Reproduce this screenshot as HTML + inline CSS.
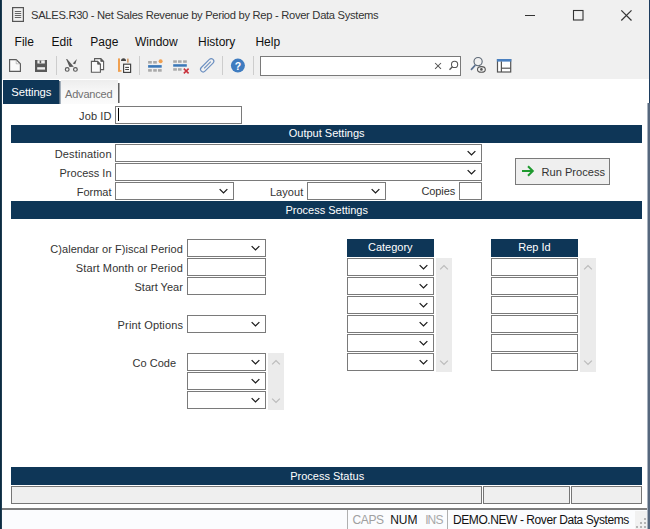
<!DOCTYPE html>
<html><head><meta charset="utf-8"><style>
html,body{margin:0;padding:0;}
body{width:650px;height:529px;position:relative;overflow:hidden;background:#fff;font-family:"Liberation Sans",sans-serif;}
.a{position:absolute;}
.t{position:absolute;white-space:pre;}
svg{overflow:visible}
</style></head><body>
<div class="a" style="left:0px;top:0px;width:650px;height:79px;background:#f0f0f0;"></div>
<svg class="a" style="left:0;top:0" width="40" height="30"><rect x="12.6" y="7.6" width="10.8" height="13.8" fill="none" stroke="#555" stroke-width="1.2"/><g stroke="#666" stroke-width="1"><line x1="14.8" y1="11.5" x2="21.2" y2="11.5"/><line x1="14.8" y1="13.5" x2="21.2" y2="13.5"/><line x1="14.8" y1="15.5" x2="21.2" y2="15.5"/><line x1="14.8" y1="17.5" x2="21.2" y2="17.5"/></g></svg>
<div class="t" style="top:9.82px;font-size:11.2px;line-height:11.2px;color:#333;letter-spacing:-0.3px;left:31px;">SALES.R30 - Net Sales Revenue by Period by Rep - Rover Data Systems</div>
<div class="a" style="left:525px;top:15px;width:10px;height:1px;background:#333;"></div>
<svg class="a" style="left:572px;top:9px" width="13" height="13"><rect x="1.5" y="1.5" width="9.5" height="9.5" fill="none" stroke="#333" stroke-width="1.1"/></svg>
<svg class="a" style="left:620px;top:9px" width="13" height="13"><line x1="1.3" y1="1.3" x2="11.5" y2="11.5" stroke="#333" stroke-width="1.2"/><line x1="11.5" y1="1.3" x2="1.3" y2="11.5" stroke="#333" stroke-width="1.2"/></svg>
<div class="t" style="top:35.54px;font-size:12px;line-height:12px;color:#111;left:14.6px;">File</div>
<div class="t" style="top:35.54px;font-size:12px;line-height:12px;color:#111;left:51.5px;">Edit</div>
<div class="t" style="top:35.54px;font-size:12px;line-height:12px;color:#111;left:90.3px;">Page</div>
<div class="t" style="top:35.54px;font-size:12px;line-height:12px;color:#111;left:135px;">Window</div>
<div class="t" style="top:35.54px;font-size:12px;line-height:12px;color:#111;left:198px;">History</div>
<div class="t" style="top:35.54px;font-size:12px;line-height:12px;color:#111;left:255.4px;">Help</div>
<div class="a" style="left:56px;top:56px;width:1px;height:19px;background:#cdcdcd;"></div>
<div class="a" style="left:139px;top:56px;width:1px;height:19px;background:#cdcdcd;"></div>
<div class="a" style="left:222px;top:56px;width:1px;height:19px;background:#cdcdcd;"></div>
<div class="a" style="left:253px;top:56px;width:1px;height:19px;background:#cdcdcd;"></div>
<div class="a" style="left:260px;top:56px;width:199px;height:18px;background:#fff;border:1px solid #7a7a7a"></div>
<svg class="a" style="left:0px;top:0px" width="650" height="80" viewBox="0 0 650 80">
<!-- new doc -->
<path d="M9.6,59.6 H16.2 L20.4,63.8 V71.4 H9.6 Z" fill="#fafafa" stroke="#5a5a5a" stroke-width="1.15"/>
<path d="M16.2,59.6 V63.8 H20.4" fill="none" stroke="#9a9a9a" stroke-width="0.6"/>
<!-- save -->
<rect x="35" y="60" width="12" height="12" fill="#5a5a5a"/>
<rect x="37.4" y="60.3" width="7.4" height="3.2" fill="#f0f0f0"/>
<rect x="39.6" y="60.6" width="1.6" height="2.6" fill="#5a5a5a"/>
<rect x="37.2" y="67.2" width="7.8" height="2.4" fill="#f0f0f0"/>
<!-- scissors -->
<path d="M66.1,59.1 L67.1,59.1 L73.8,66.8 L69.5,66.9 Z" fill="#595959"/>
<path d="M76.9,59.1 L75.2,64.3 L72.7,63.6 Z" fill="#595959"/>
<circle cx="67.2" cy="69.4" r="1.85" fill="none" stroke="#595959" stroke-width="1.2"/>
<circle cx="75.4" cy="69.4" r="1.85" fill="none" stroke="#595959" stroke-width="1.2"/>
<!-- copy -->
<path d="M94.6,58.6 H100.8 L103.6,61.4 V69.6 H94.6 Z" fill="#fafafa" stroke="#5a5a5a" stroke-width="1.1"/>
<path d="M91.4,61.4 H97.6 L100.4,64.2 V72.2 H91.4 Z" fill="#fafafa" stroke="#5a5a5a" stroke-width="1.1"/>
<path d="M97.6,61.4 V64.2 H100.4 Z" fill="#5a5a5a" stroke="#5a5a5a" stroke-width="0.8"/>
<path d="M100.8,58.6 V61.4 H103.6 Z" fill="#5a5a5a" stroke="#5a5a5a" stroke-width="0.8"/>
<!-- paste -->
<rect x="118" y="58.4" width="2" height="13.2" fill="#f0a050"/>
<rect x="118" y="70.2" width="3.5" height="1.4" fill="#f0a050"/>
<path d="M121,61 Q121,58.2 123.5,58.2 Q126,58.2 126,61 Z" fill="#444"/>
<rect x="127" y="58.6" width="1.7" height="4" fill="#d4a070"/>
<rect x="123.6" y="64.2" width="7" height="8.2" fill="#fff" stroke="#444" stroke-width="1.2"/>
<line x1="125.2" y1="67.4" x2="129" y2="67.4" stroke="#444" stroke-width="1.1"/>
<line x1="125.2" y1="69.5" x2="129" y2="69.5" stroke="#444" stroke-width="1.1"/>
<!-- insert row -->
<g fill="#a9a9a9">
<rect x="148.1" y="61" width="3.7" height="2.6"/><rect x="153.2" y="61" width="3.6" height="2.6"/>
<rect x="148.1" y="69.1" width="3.7" height="2.6"/><rect x="153.2" y="69.1" width="3.6" height="2.6"/><rect x="158" y="69.1" width="3.7" height="2.6"/>
</g>
<rect x="148.1" y="65.1" width="13.6" height="2.6" fill="#3b78b8"/>
<circle cx="160.6" cy="61.2" r="2" fill="#f0a050"/>
<!-- delete row -->
<g fill="#a9a9a9">
<rect x="173.2" y="60.3" width="3.7" height="2.5"/><rect x="178" y="60.3" width="3.6" height="2.5"/><rect x="183.1" y="60.3" width="3.7" height="2.5"/>
<rect x="173.2" y="68.2" width="3.7" height="2.5"/><rect x="178" y="68.2" width="3.6" height="2.5"/>
</g>
<rect x="173.2" y="64.2" width="13.6" height="2.5" fill="#3b78b8"/>
<path d="M183.8,68.6 L188.6,73.4 M188.6,68.6 L183.8,73.4" stroke="#c8303a" stroke-width="1.5"/>
<!-- paperclip -->
<g transform="translate(207.1,65.4) rotate(45)">
<path d="M2.6,-4 V5.6 A2.6,2.6 0 0 1 -2.6,5.6 V-5.8 A2.6,2.6 0 0 1 2.6,-5.8 V-4" fill="none" stroke="#6b8fc0" stroke-width="1.15"/>
<path d="M0,-5.2 V4.2" stroke="#6b8fc0" stroke-width="1.1" fill="none"/>
</g>
<!-- help -->
<circle cx="237.9" cy="65.6" r="7" fill="#3f7cc0"/>
<text x="237.9" y="69.6" text-anchor="middle" font-family="Liberation Sans" font-weight="bold" font-size="10.5" fill="#fff">?</text>
<!-- search x and magnifier -->
<path d="M435.1,63 L441,68.8 M441,63 L435.1,68.8" stroke="#555" stroke-width="1.05"/>
<circle cx="454.6" cy="64.4" r="3.1" fill="none" stroke="#555" stroke-width="1.05"/>
<line x1="452.4" y1="66.7" x2="449.5" y2="69.7" stroke="#555" stroke-width="1.3"/>
<!-- search eye -->
<circle cx="478.1" cy="61.6" r="4.1" fill="none" stroke="#606b78" stroke-width="1.15"/>
<line x1="475.3" y1="65.1" x2="471" y2="69.9" stroke="#5a7090" stroke-width="1.6"/>
<ellipse cx="481.4" cy="69.4" rx="4.7" ry="3.6" fill="#f0f0f0"/>
<ellipse cx="481.4" cy="69.4" rx="3.9" ry="2.8" fill="none" stroke="#555" stroke-width="1.1"/>
<circle cx="481.4" cy="69.4" r="1.3" fill="#555"/>
<!-- layout -->
<rect x="497.5" y="59.6" width="13.2" height="12.4" fill="#fff" stroke="#555" stroke-width="1.2"/>
<rect x="496.9" y="59" width="14.4" height="2.6" fill="#4a80c0"/>
<line x1="501.4" y1="61.5" x2="501.4" y2="72" stroke="#555" stroke-width="1.2"/>
<line x1="501.4" y1="68.2" x2="510.7" y2="68.2" stroke="#555" stroke-width="1.2"/>
</svg>

<div class="a" style="left:2px;top:79px;width:645px;height:429px;background:#fff;"></div>
<div class="a" style="left:3px;top:80px;width:56px;height:24px;background:#0e3657;"></div>
<div class="t" style="top:87.23px;font-size:11.3px;line-height:11.3px;color:#fff;letter-spacing:-0.1px;left:11.3px;">Settings</div>
<div class="a" style="left:61px;top:80px;width:57px;height:24px;background:linear-gradient(#ededed,#f6f6f6 45%,#fbfbfb);"></div>
<div class="a" style="left:118px;top:83px;width:1px;height:20px;background:#606060;"></div>
<div class="a" style="left:119px;top:83px;width:1px;height:20px;background:#a8a8a8;"></div>
<div class="a" style="left:59px;top:81px;width:1px;height:23px;background:#5d7184;"></div>
<div class="a" style="left:60px;top:81px;width:1px;height:23px;background:#a4b0bc;"></div>
<div class="t" style="top:88.99px;font-size:11px;line-height:11px;color:#707070;letter-spacing:-0.18px;left:65px;">Advanced</div>
<div class="t" style="top:110.99px;font-size:11px;line-height:11px;color:#333;letter-spacing:0.13px;right:538.37px;text-align:right;">Job ID</div>
<div class="a" style="left:115px;top:106px;width:125px;height:16px;background:#fff;border:1px solid #7a7a7a"></div>
<div class="a" style="left:118px;top:108px;width:1px;height:13px;background:#000;"></div>
<div class="a" style="left:11px;top:125px;width:631px;height:18px;background:#0e3657;"></div>
<div class="t" style="top:128.49px;font-size:11px;line-height:11px;color:#fff;left:126.70px;width:400px;text-align:center;">Output Settings</div>
<div class="t" style="top:148.69px;font-size:11px;line-height:11px;color:#333;letter-spacing:0.18px;right:538.32px;text-align:right;">Destination</div>
<div class="a" style="left:115px;top:144px;width:365px;height:16px;background:#fff;border:1px solid #7a7a7a"></div>
<div class="t" style="top:167.69px;font-size:11px;line-height:11px;color:#333;right:538.50px;text-align:right;">Process In</div>
<div class="a" style="left:115px;top:163px;width:365px;height:16px;background:#fff;border:1px solid #7a7a7a"></div>
<div class="t" style="top:186.69px;font-size:11px;line-height:11px;color:#333;right:538.50px;text-align:right;">Format</div>
<div class="a" style="left:115px;top:182px;width:117px;height:16px;background:#fff;border:1px solid #7a7a7a"></div>
<div class="t" style="top:186.69px;font-size:11px;line-height:11px;color:#333;letter-spacing:0.07px;right:346.63px;text-align:right;">Layout</div>
<div class="a" style="left:307px;top:182px;width:77px;height:16px;background:#fff;border:1px solid #7a7a7a"></div>
<div class="t" style="top:186.49px;font-size:11px;line-height:11px;color:#333;letter-spacing:-0.1px;right:194.90px;text-align:right;">Copies</div>
<div class="a" style="left:459px;top:182px;width:21px;height:16px;background:#fff;border:1px solid #7a7a7a"></div>
<div class="a" style="left:515px;top:158px;width:93px;height:25px;background:#efefef;border:1px solid #7a7a7a"></div>
<svg class="a" style="left:0;top:0" width="650" height="200"><line x1="522" y1="171" x2="533" y2="171" stroke="#1f9a2f" stroke-width="2"/><polyline points="528,166.2 532.8,171 528,175.8" fill="none" stroke="#1f9a2f" stroke-width="2"/></svg>
<div class="t" style="top:166.90px;font-size:11.1px;line-height:11.1px;color:#333;left:541.5px;">Run Process</div>
<div class="a" style="left:11px;top:201px;width:631px;height:18px;background:#0e3657;"></div>
<div class="t" style="top:204.69px;font-size:11px;line-height:11px;color:#fff;left:126.70px;width:400px;text-align:center;">Process Settings</div>
<div class="t" style="top:244.09px;font-size:11px;line-height:11px;color:#333;letter-spacing:0.04px;right:467.16px;text-align:right;">C)alendar or F)iscal Period</div>
<div class="a" style="left:187px;top:239px;width:77px;height:16px;background:#fff;border:1px solid #7a7a7a"></div>
<div class="t" style="top:262.99px;font-size:11px;line-height:11px;color:#333;letter-spacing:0.12px;right:467.08px;text-align:right;">Start Month or Period</div>
<div class="a" style="left:187px;top:258px;width:77px;height:16px;background:#fff;border:1px solid #7a7a7a"></div>
<div class="t" style="top:281.69px;font-size:11px;line-height:11px;color:#333;right:467.20px;text-align:right;">Start Year</div>
<div class="a" style="left:187px;top:277px;width:77px;height:16px;background:#fff;border:1px solid #7a7a7a"></div>
<div class="t" style="top:319.69px;font-size:11px;line-height:11px;color:#333;letter-spacing:0.15px;right:466.85px;text-align:right;">Print Options</div>
<div class="a" style="left:187px;top:315px;width:77px;height:16px;background:#fff;border:1px solid #7a7a7a"></div>
<div class="t" style="top:357.69px;font-size:11px;line-height:11px;color:#333;right:474.00px;text-align:right;">Co Code</div>
<div class="a" style="left:187px;top:353px;width:77px;height:16px;background:#fff;border:1px solid #7a7a7a"></div>
<div class="a" style="left:187px;top:372px;width:77px;height:16px;background:#fff;border:1px solid #7a7a7a"></div>
<div class="a" style="left:187px;top:391px;width:77px;height:16px;background:#fff;border:1px solid #7a7a7a"></div>
<div class="a" style="left:268px;top:353px;width:16px;height:57px;background:#ebebeb;"></div>
<div class="a" style="left:347px;top:239px;width:87px;height:18px;background:#0e3657;"></div>
<div class="t" style="top:242.49px;font-size:11px;line-height:11px;color:#fff;left:190.30px;width:400px;text-align:center;">Category</div>
<div class="a" style="left:347px;top:258px;width:85px;height:16px;background:#fff;border:1px solid #7a7a7a"></div>
<div class="a" style="left:347px;top:277px;width:85px;height:16px;background:#fff;border:1px solid #7a7a7a"></div>
<div class="a" style="left:347px;top:296px;width:85px;height:16px;background:#fff;border:1px solid #7a7a7a"></div>
<div class="a" style="left:347px;top:315px;width:85px;height:16px;background:#fff;border:1px solid #7a7a7a"></div>
<div class="a" style="left:347px;top:334px;width:85px;height:16px;background:#fff;border:1px solid #7a7a7a"></div>
<div class="a" style="left:347px;top:353px;width:85px;height:16px;background:#fff;border:1px solid #7a7a7a"></div>
<div class="a" style="left:436px;top:258px;width:16px;height:114px;background:#ebebeb;"></div>
<div class="a" style="left:491px;top:239px;width:87px;height:18px;background:#0e3657;"></div>
<div class="t" style="top:242.49px;font-size:11px;line-height:11px;color:#fff;left:334.50px;width:400px;text-align:center;">Rep Id</div>
<div class="a" style="left:491px;top:258px;width:85px;height:16px;background:#fff;border:1px solid #7a7a7a"></div>
<div class="a" style="left:491px;top:277px;width:85px;height:16px;background:#fff;border:1px solid #7a7a7a"></div>
<div class="a" style="left:491px;top:296px;width:85px;height:16px;background:#fff;border:1px solid #7a7a7a"></div>
<div class="a" style="left:491px;top:315px;width:85px;height:16px;background:#fff;border:1px solid #7a7a7a"></div>
<div class="a" style="left:491px;top:334px;width:85px;height:16px;background:#fff;border:1px solid #7a7a7a"></div>
<div class="a" style="left:491px;top:353px;width:85px;height:16px;background:#fff;border:1px solid #7a7a7a"></div>
<div class="a" style="left:580px;top:258px;width:16px;height:114px;background:#ebebeb;"></div>
<div class="a" style="left:11px;top:467px;width:631px;height:18px;background:#0e3657;"></div>
<div class="t" style="top:470.89px;font-size:11px;line-height:11px;color:#fff;left:127.20px;width:400px;text-align:center;">Process Status</div>
<div class="a" style="left:11px;top:486px;width:469px;height:16px;background:#efefef;border:1px solid #767676"></div>
<div class="a" style="left:483px;top:486px;width:85px;height:16px;background:#efefef;border:1px solid #767676"></div>
<div class="a" style="left:571px;top:486px;width:69px;height:16px;background:#efefef;border:1px solid #767676"></div>
<div class="a" style="left:2px;top:508px;width:646px;height:2px;background:#7d7d7d;"></div>
<div class="a" style="left:2px;top:510px;width:645px;height:19px;background:#fbfcfe;"></div>
<div class="a" style="left:347px;top:510px;width:1px;height:19px;background:#b0b0b0;"></div>
<div class="a" style="left:447px;top:510px;width:1px;height:19px;background:#b0b0b0;"></div>
<div class="t" style="top:514.04px;font-size:12px;line-height:12px;color:#a0a0a0;letter-spacing:-0.35px;left:352.5px;">CAPS</div>
<div class="t" style="top:514.04px;font-size:12px;line-height:12px;color:#111;left:390.2px;">NUM</div>
<div class="t" style="top:514.04px;font-size:12px;line-height:12px;color:#a8a8a8;letter-spacing:-0.9px;left:425.2px;">INS</div>
<div class="t" style="top:513.84px;font-size:12px;line-height:12px;color:#111;letter-spacing:-0.42px;left:453px;">DEMO.NEW - Rover Data Systems</div>
<div class="a" style="left:635px;top:511px;width:12px;height:18px;background:#f1f1f1;"></div>
<div class="a" style="left:644px;top:518px;width:2px;height:2px;background:#b5b5b5;"></div>
<div class="a" style="left:640px;top:522px;width:2px;height:2px;background:#b5b5b5;"></div>
<div class="a" style="left:644px;top:522px;width:2px;height:2px;background:#b5b5b5;"></div>
<div class="a" style="left:636px;top:526px;width:2px;height:2px;background:#b5b5b5;"></div>
<div class="a" style="left:640px;top:526px;width:2px;height:2px;background:#b5b5b5;"></div>
<div class="a" style="left:644px;top:526px;width:2px;height:2px;background:#b5b5b5;"></div>
<div class="a" style="left:0px;top:0px;width:2px;height:529px;background:#0c2c42;box-shadow:inset -0.6px 0 0 #2c4a5e"></div>
<div class="a" style="left:649px;top:0px;width:1px;height:103px;background:#1d3c5e;"></div>
<div class="a" style="left:647px;top:103px;width:1px;height:426px;background:#a9b3bf;"></div>
<div class="a" style="left:648px;top:103px;width:2px;height:426px;background:#56677d;"></div>
<svg class="a" style="left:0;top:0" width="650" height="529"><polyline points="467.65,151.15 471.50,154.85 475.35,151.15" fill="none" stroke="#1a1a1a" stroke-width="1.3"/><polyline points="467.65,170.15 471.50,173.85 475.35,170.15" fill="none" stroke="#1a1a1a" stroke-width="1.3"/><polyline points="219.65,189.15 223.50,192.85 227.35,189.15" fill="none" stroke="#1a1a1a" stroke-width="1.3"/><polyline points="371.65,189.15 375.50,192.85 379.35,189.15" fill="none" stroke="#1a1a1a" stroke-width="1.3"/><polyline points="251.65,246.15 255.50,249.85 259.35,246.15" fill="none" stroke="#1a1a1a" stroke-width="1.3"/><polyline points="251.65,322.15 255.50,325.85 259.35,322.15" fill="none" stroke="#1a1a1a" stroke-width="1.3"/><polyline points="251.65,360.15 255.50,363.85 259.35,360.15" fill="none" stroke="#1a1a1a" stroke-width="1.3"/><polyline points="251.65,379.15 255.50,382.85 259.35,379.15" fill="none" stroke="#1a1a1a" stroke-width="1.3"/><polyline points="251.65,398.15 255.50,401.85 259.35,398.15" fill="none" stroke="#1a1a1a" stroke-width="1.3"/><polyline points="272.15,364.35 276.00,360.65 279.85,364.35" fill="none" stroke="#bcbcbc" stroke-width="1.3"/><polyline points="272.15,398.65 276.00,402.35 279.85,398.65" fill="none" stroke="#bcbcbc" stroke-width="1.3"/><polyline points="419.65,265.15 423.50,268.85 427.35,265.15" fill="none" stroke="#1a1a1a" stroke-width="1.3"/><polyline points="419.65,284.15 423.50,287.85 427.35,284.15" fill="none" stroke="#1a1a1a" stroke-width="1.3"/><polyline points="419.65,303.15 423.50,306.85 427.35,303.15" fill="none" stroke="#1a1a1a" stroke-width="1.3"/><polyline points="419.65,322.15 423.50,325.85 427.35,322.15" fill="none" stroke="#1a1a1a" stroke-width="1.3"/><polyline points="419.65,341.15 423.50,344.85 427.35,341.15" fill="none" stroke="#1a1a1a" stroke-width="1.3"/><polyline points="419.65,360.15 423.50,363.85 427.35,360.15" fill="none" stroke="#1a1a1a" stroke-width="1.3"/><polyline points="440.15,269.35 444.00,265.65 447.85,269.35" fill="none" stroke="#bcbcbc" stroke-width="1.3"/><polyline points="440.15,360.65 444.00,364.35 447.85,360.65" fill="none" stroke="#bcbcbc" stroke-width="1.3"/><polyline points="584.15,269.35 588.00,265.65 591.85,269.35" fill="none" stroke="#bcbcbc" stroke-width="1.3"/><polyline points="584.15,360.65 588.00,364.35 591.85,360.65" fill="none" stroke="#bcbcbc" stroke-width="1.3"/></svg>
</body></html>
